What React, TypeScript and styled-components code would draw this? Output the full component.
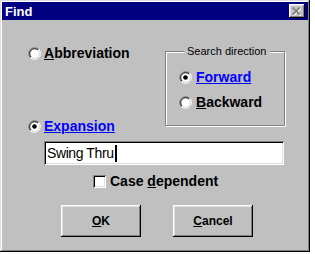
import styled, { createGlobalStyle } from "styled-components";

const GlobalStyle = createGlobalStyle`
  html, body {
    margin: 0;
    padding: 0;
    background: #fff;
  }
  body {
    font-family: "Liberation Sans", Arial, sans-serif;
  }
`;

const Window = styled.div`
  width: 310px;
  height: 252px;
  box-sizing: border-box;
  padding: 2px;
  background: #c0c0c0;
  box-shadow: inset -1px -1px #000, inset 1px 1px #dfdfdf, inset -2px -2px #808080,
    inset 2px 2px #fff;
  display: flex;
  flex-direction: column;
`;

const TitleBar = styled.div`
  height: 18px;
  background: #000080;
  display: flex;
  align-items: center;
  justify-content: space-between;
  padding: 0 3px 0 3px;
`;

const TitleText = styled.span`
  color: #fff;
  font-weight: bold;
  font-size: 13px;
  line-height: 15px;
`;

const CloseButton = styled.div`
  width: 16px;
  height: 14px;
  box-sizing: border-box;
  background: #c0c0c0;
  box-shadow: inset -1px -1px #000, inset 1px 1px #fff, inset -2px -2px #808080,
    inset 2px 2px #dfdfdf;
  display: flex;
  align-items: center;
  justify-content: center;
`;

const Body = styled.div`
  display: flex;
  flex-direction: column;
  padding: 25px 0 0 26px;
`;

const TopSection = styled.div`
  display: flex;
  align-items: stretch;
`;

const LeftCol = styled.div`
  width: 137px;
  display: flex;
  flex-direction: column;
  justify-content: space-between;
`;

const GroupBox = styled.div`
  position: relative;
  width: 120px;
  height: 75px;
  box-sizing: border-box;
  margin: 6px 0 8px 0;
  padding: 17px 0 0 13px;
  border: 1px solid #808080;
  box-shadow: inset 1px 1px 0 #fff, 1px 1px 0 #fff;
  display: flex;
  flex-direction: column;
  gap: 9px;
`;

const Legend = styled.span`
  position: absolute;
  top: -8px;
  left: 18px;
  padding: 0 3px;
  background: #c0c0c0;
  font-size: 11px;
  line-height: 14px;
  color: #000;
`;

const OptionRow = styled.div<{ $gap?: number }>`
  display: flex;
  align-items: center;
  gap: ${(p) => p.$gap ?? 3}px;
  height: 16px;
`;

const OptionLabel = styled.span<{ $active?: boolean }>`
  font-size: 14px;
  font-weight: bold;
  line-height: 16px;
  color: ${(p) => (p.$active ? "#0000ff" : "#000")};
  text-decoration: ${(p) => (p.$active ? "underline" : "none")};
  white-space: nowrap;
`;

const TextField = styled.div`
  margin: 7px 0 0 16px;
  width: 240px;
  height: 24px;
  box-sizing: border-box;
  padding: 0 3px;
  background: #fff;
  box-shadow: inset 1px 1px #808080, inset -1px -1px #fff, inset 2px 2px #000,
    inset -2px -2px #dfdfdf;
  display: flex;
  align-items: center;
  font-size: 14px;
  letter-spacing: -0.4px;
  color: #000;
`;

const Caret = styled.span`
  display: inline-block;
  width: 2px;
  height: 17px;
  margin-left: 1px;
  background: #000;
`;

const CheckRow = styled.div`
  margin: 8px 0 0 65px;
  display: flex;
  align-items: center;
  gap: 4px;
  height: 16px;
`;

const CheckBox = styled.span`
  width: 13px;
  height: 13px;
  box-sizing: border-box;
  background: #fff;
  box-shadow: inset 1px 1px #808080, inset -1px -1px #fff, inset 2px 2px #000,
    inset -2px -2px #dfdfdf;
`;

const ButtonRow = styled.div`
  margin: 16px 0 0 33px;
  display: flex;
  gap: 32px;
`;

const Button = styled.div`
  width: 80px;
  height: 32px;
  box-sizing: border-box;
  background: #c0c0c0;
  box-shadow: inset -1px -1px #000, inset 1px 1px #fff, inset -2px -2px #808080,
    inset 2px 2px #dfdfdf;
  display: flex;
  align-items: center;
  justify-content: center;
  font-size: 12px;
  font-weight: bold;
  color: #000;
`;

function Radio({ checked }: { checked?: boolean }) {
  return (
    <svg width="13" height="13" viewBox="0 0 13 13">
      <circle cx="6.5" cy="6.5" r="5" fill="#fff" />
      <path d="M2.26 10.74 A6 6 0 0 1 10.74 2.26" stroke="#808080" fill="none" />
      <path d="M10.74 2.26 A6 6 0 0 1 2.26 10.74" stroke="#fff" fill="none" />
      <path d="M2.97 10.03 A5 5 0 0 1 10.03 2.97" stroke="#000" fill="none" />
      <path d="M10.03 2.97 A5 5 0 0 1 2.97 10.03" stroke="#dfdfdf" fill="none" />
      {checked && <circle cx="6.5" cy="6.5" r="2.3" fill="#000" />}
    </svg>
  );
}

function CloseGlyph() {
  return (
    <svg width="10" height="9" viewBox="0 0 10 9">
      <path d="M1.5 1.5 L8.5 8.5 M8.5 1.5 L1.5 8.5" stroke="#fff" strokeWidth="1.8" />
      <path d="M0.7 0.7 L7.7 7.7 M7.7 0.7 L0.7 7.7" stroke="#808080" strokeWidth="1.8" />
    </svg>
  );
}

export default function App() {
  return (
    <>
      <GlobalStyle />
      <Window>
        <TitleBar>
          <TitleText>Find</TitleText>
          <CloseButton>
            <CloseGlyph />
          </CloseButton>
        </TitleBar>
        <Body>
          <TopSection>
            <LeftCol>
              <OptionRow>
                <Radio />
                <OptionLabel>
                  <u>A</u>bbreviation
                </OptionLabel>
              </OptionRow>
              <OptionRow>
                <Radio checked />
                <OptionLabel $active>Expansion</OptionLabel>
              </OptionRow>
            </LeftCol>
            <GroupBox>
              <Legend>Search direction</Legend>
              <OptionRow $gap={4}>
                <Radio checked />
                <OptionLabel $active>Forward</OptionLabel>
              </OptionRow>
              <OptionRow $gap={4}>
                <Radio />
                <OptionLabel>
                  <u>B</u>ackward
                </OptionLabel>
              </OptionRow>
            </GroupBox>
          </TopSection>
          <TextField>
            Swing Thru
            <Caret />
          </TextField>
          <CheckRow>
            <CheckBox />
            <OptionLabel>
              Case <u>d</u>ependent
            </OptionLabel>
          </CheckRow>
          <ButtonRow>
            <Button>
              <span>
                <u>O</u>K
              </span>
            </Button>
            <Button>
              <span>
                <u>C</u>ancel
              </span>
            </Button>
          </ButtonRow>
        </Body>
      </Window>
    </>
  );
}
